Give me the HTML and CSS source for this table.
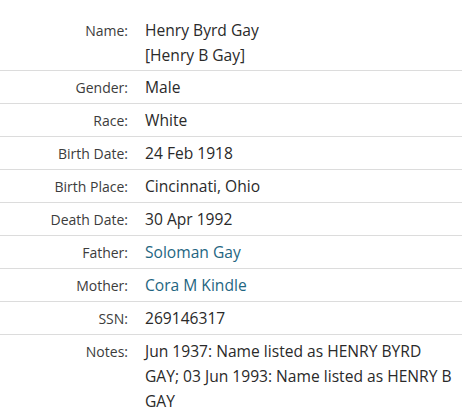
FILE: index.html
```html
<!DOCTYPE html>
<html>
<head>
<meta charset="utf-8">
<link rel="stylesheet" href="styles.css">
</head>
<body>
<dl class="record">
  <div class="row first"><dt>Name:</dt><dd>Henry Byrd Gay<br>[Henry B Gay]</dd></div>
  <div class="row"><dt>Gender:</dt><dd>Male</dd></div>
  <div class="row"><dt>Race:</dt><dd>White</dd></div>
  <div class="row"><dt>Birth Date:</dt><dd>24 Feb 1918</dd></div>
  <div class="row"><dt>Birth Place:</dt><dd>Cincinnati, Ohio</dd></div>
  <div class="row"><dt>Death Date:</dt><dd>30 Apr 1992</dd></div>
  <div class="row"><dt>Father:</dt><dd><a href="#">Soloman Gay</a></dd></div>
  <div class="row"><dt>Mother:</dt><dd><a href="#">Cora M Kindle</a></dd></div>
  <div class="row"><dt>SSN:</dt><dd>269146317</dd></div>
  <div class="row last"><dt>Notes:</dt><dd>Jun 1937: Name listed as HENRY BYRD GAY; 03 Jun 1993: Name listed as HENRY B GAY</dd></div>
</dl>
</body>
</html>
```
FILE: styles.css
```css
html, body {
  margin: 0;
  padding: 0;
  background: #fff;
}
body {
  font-family: "Open Sans", "Liberation Sans", sans-serif;
  color: #333;
}
.record {
  margin: 0;
  width: 462px;
}
.row {
  display: grid;
  grid-template-columns: 128px 1fr;
  column-gap: 17px;
  padding: 4px 0 3px;
  border-top: 1px solid #dcdcdc;
  line-height: 25px;
}
.row.first {
  border-top: none;
  padding-top: 18px;
  padding-bottom: 2px;
}
dt {
  text-align: right;
  font-size: 14px;
  color: #3c3c3c;
}
dd {
  margin: 0;
  font-size: 15.6px;
  color: #2a2a2a;
  padding-right: 8px;
}
a {
  color: #1f6682;
  text-decoration: none;
}
```
